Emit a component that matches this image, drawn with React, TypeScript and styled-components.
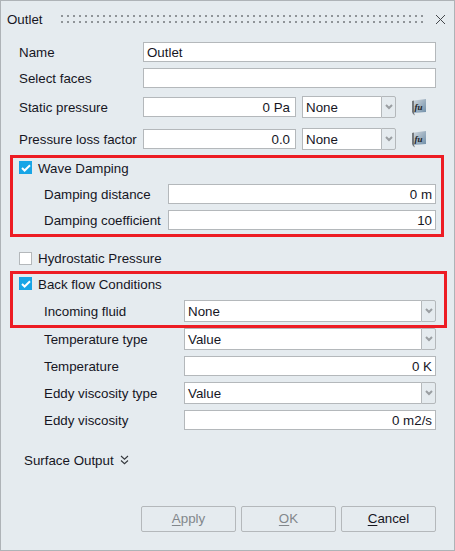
import React from 'react';
import styled, { createGlobalStyle } from 'styled-components';

const GlobalStyle = createGlobalStyle`
  html, body {
    margin: 0;
    padding: 0;
    background-color: #e5ebef;
  }
`;

const Dialog = styled.div`
  box-sizing: border-box;
  width: 455px;
  height: 551px;
  display: flex;
  flex-direction: column;
  background-color: #e5ebef;
  border: 1px solid #aeb3b7;
  font-family: 'Liberation Sans', Arial, sans-serif;
  font-size: 13.33px;
  color: #16161f;
`;

const TitleBar = styled.div`
  display: flex;
  align-items: center;
  height: 36px;
  padding: 0 8px 0 6px;
  flex-shrink: 0;
`;

const Title = styled.div`
  width: 54px;
`;

const Grip = styled.div`
  flex: 1;
  height: 8px;
  margin-right: 10px;
  background-image:
    linear-gradient(90deg, #8f9498 2px, transparent 2px),
    linear-gradient(90deg, #8f9498 2px, transparent 2px);
  background-size: 6px 2px;
  background-position: 0 0, 0 6px;
  background-repeat: repeat-x;
`;

const CloseButton = styled.button`
  display: flex;
  align-items: center;
  justify-content: center;
  width: 12px;
  height: 12px;
  padding: 0;
  border: none;
  background: none;
  color: #44484c;
`;

const Form = styled.div`
  display: flex;
  flex-direction: column;
  padding: 4px 18px 0;
`;

const Row = styled.div<{ $top?: number }>`
  display: flex;
  align-items: center;
  height: 22px;
  margin-top: ${props => props.$top ?? 0}px;
`;

const Label = styled.label<{ $width: number; $indent?: number }>`
  width: ${props => props.$width}px;
  padding-left: ${props => props.$indent ?? 0}px;
  box-sizing: border-box;
  flex-shrink: 0;
  white-space: nowrap;
`;

const Input = styled.div<{ $align?: string; $width?: number }>`
  box-sizing: border-box;
  height: 20px;
  line-height: 18px;
  padding: 1px ${props => (props.$width ? 5 : 3)}px 0 3px;
  background-color: #fff;
  border: 1px solid #b4b8bb;
  white-space: nowrap;
  text-align: ${props => props.$align ?? 'left'};
  ${props => (props.$width ? `width: ${props.$width}px;` : 'flex: 1;')}
`;

const Combo = styled.div<{ $width?: number; $left?: number }>`
  box-sizing: border-box;
  display: flex;
  height: 22px;
  margin-left: ${props => props.$left ?? 0}px;
  ${props => (props.$width ? `width: ${props.$width}px;` : 'flex: 1;')}
`;

const ComboValue = styled.div`
  box-sizing: border-box;
  flex: 1;
  line-height: 20px;
  padding: 1px 3px 0;
  background-color: #fff;
  border: 1px solid #b4b8bb;
  border-right: none;
`;

const ComboArrow = styled.div`
  box-sizing: border-box;
  display: flex;
  align-items: center;
  justify-content: center;
  width: 15px;
  border: 1px solid #b4b8bb;
  border-radius: 0 2px 2px 0;
  color: #9a9ea2;
`;

const UnitIcon = styled.svg`
  margin-left: 16px;
  flex-shrink: 0;
`;

const Annotated = styled.div<{ $right: number; $top: number; $height: number }>`
  box-sizing: border-box;
  height: ${props => props.$height}px;
  margin: ${props => props.$top}px ${props => -props.$right}px 0 -9px;
  padding: 0 ${props => props.$right - 3}px 0 6px;
  border: 3px solid #ed1c24;
`;

const CheckRow = styled.div<{ $top?: number }>`
  display: flex;
  align-items: center;
  gap: 6px;
  height: 13px;
  margin-top: ${props => props.$top ?? 0}px;
`;

const CheckText = styled.span<{ $raised?: boolean }>`
  padding-top: ${props => (props.$raised ? 0 : 2)}px;
`;

const CheckBox = styled.span<{ $checked: boolean }>`
  box-sizing: border-box;
  display: flex;
  align-items: center;
  justify-content: center;
  width: 13px;
  height: 13px;
  background-color: ${props => (props.$checked ? '#18a5e6' : '#fff')};
  border: 1px solid ${props => (props.$checked ? '#18a5e6' : '#b4b8bb')};
`;

const Expander = styled.div`
  display: flex;
  align-items: center;
  gap: 6px;
  margin: 21px 0 0 5px;
  height: 16px;
`;

const Footer = styled.div`
  display: flex;
  justify-content: flex-end;
  gap: 5px;
  margin-top: auto;
  padding: 0 18px 18px;
`;

const Button = styled.button<{ $disabled?: boolean }>`
  box-sizing: border-box;
  width: 95px;
  height: 26px;
  padding: 0 0 2px;
  background: none;
  border: 1px solid #b4b8bb;
  border-radius: 2px;
  font: inherit;
  color: ${props => (props.$disabled ? '#82878b' : '#16161f')};
  u {
    text-underline-offset: 2px;
  }
`;

const Chevron = () => (
  <svg width="8" height="6" viewBox="0 0 8 6" aria-hidden="true">
    <path d="M1 1 L4 4 L7 1" fill="none" stroke="currentColor" strokeWidth="2" />
  </svg>
);

const Check = () => (
  <svg width="10" height="8" viewBox="0 0 10 8" aria-hidden="true">
    <path d="M1 4 L3.6 6.5 L9 1.2" fill="none" stroke="#fff" strokeWidth="2" />
  </svg>
);

const ParamIcon = ({ id }: { id: string }) => (
  <UnitIcon width="14" height="17" viewBox="0 0 14 17" aria-hidden="true">
    <defs>
      <linearGradient id={id} x1="0" y1="0" x2="1" y2="1">
        <stop offset="0" stopColor="#cfd6dc" />
        <stop offset="1" stopColor="#6f8ea8" />
      </linearGradient>
    </defs>
    <path d="M0 2 L2 1.5 V14 L3 16.5 L1 15 L0 13 Z" fill="#74787c" />
    <path d="M2 1.5 L14 0 V13 L2 14 Z" fill={`url(#${id})`} />
    <text x="2.5" y="10.5" fontSize="9" fontStyle="italic" fontWeight="700" fontFamily="Liberation Serif, serif" fill="#1d2226">fu</text>
  </UnitIcon>
);

const Select = ({ value, width, left }: { value: string; width?: number; left?: number }) => (
  <Combo $width={width} $left={left}>
    <ComboValue>{value}</ComboValue>
    <ComboArrow><Chevron /></ComboArrow>
  </Combo>
);

const App: React.FC = () => {
  return (
    <Dialog>
      <GlobalStyle />
      <TitleBar>
        <Title>Outlet</Title>
        <Grip />
        <CloseButton aria-label="Close">
          <svg width="11" height="11" viewBox="0 0 11 11">
            <path d="M1 1 L10 10 M10 1 L1 10" stroke="currentColor" strokeWidth="1" fill="none" />
          </svg>
        </CloseButton>
      </TitleBar>

      <Form>
        <Row>
          <Label $width={124}>Name</Label>
          <Input>Outlet</Input>
        </Row>
        <Row $top={4}>
          <Label $width={124}>Select faces</Label>
          <Input />
        </Row>
        <Row $top={7}>
          <Label $width={124}>Static pressure</Label>
          <Input $width={153} $align="right">0 Pa</Input>
          <Select value="None" width={94} left={6} />
          <ParamIcon id="fx1" />
        </Row>
        <Row $top={10}>
          <Label $width={124}>Pressure loss factor</Label>
          <Input $width={153} $align="right">0.0</Input>
          <Select value="None" width={94} left={6} />
          <ParamIcon id="fx2" />
        </Row>

        <Annotated $top={5} $right={8} $height={82}>
          <CheckRow $top={3}>
            <CheckBox $checked><Check /></CheckBox>
            <CheckText>Wave Damping</CheckText>
          </CheckRow>
          <Row $top={9}>
            <Label $width={149} $indent={25}>Damping distance</Label>
            <Input $align="right">0 m</Input>
          </Row>
          <Row $top={4}>
            <Label $width={149} $indent={25}>Damping coefficient</Label>
            <Input $align="right">10</Input>
          </Row>
        </Annotated>

        <CheckRow $top={15}>
          <CheckBox $checked={false} />
          <CheckText $raised>Hydrostatic Pressure</CheckText>
        </CheckRow>

        <Annotated $top={6} $right={11} $height={57}>
          <CheckRow $top={3}>
            <CheckBox $checked><Check /></CheckBox>
            <CheckText>Back flow Conditions</CheckText>
          </CheckRow>
          <Row $top={10}>
            <Label $width={165} $indent={25}>Incoming fluid</Label>
            <Select value="None" />
          </Row>
        </Annotated>

        <Row>
          <Label $width={165} $indent={25}>Temperature type</Label>
          <Select value="Value" />
        </Row>
        <Row $top={5}>
          <Label $width={165} $indent={25}>Temperature</Label>
          <Input $align="right">0 K</Input>
        </Row>
        <Row $top={5}>
          <Label $width={165} $indent={25}>Eddy viscosity type</Label>
          <Select value="Value" />
        </Row>
        <Row $top={5}>
          <Label $width={165} $indent={25}>Eddy viscosity</Label>
          <Input $align="right">0 m2/s</Input>
        </Row>

        <Expander>
          Surface Output
          <svg width="9" height="10" viewBox="0 0 9 10" aria-hidden="true">
            <path d="M1 1 L4.5 4.2 L8 1 M1 5.5 L4.5 8.7 L8 5.5" fill="none" stroke="#33373b" strokeWidth="1.1" />
          </svg>
        </Expander>
      </Form>

      <Footer>
        <Button $disabled><u>A</u>pply</Button>
        <Button $disabled><u>O</u>K</Button>
        <Button><u>C</u>ancel</Button>
      </Footer>
    </Dialog>
  );
};

export default App;
